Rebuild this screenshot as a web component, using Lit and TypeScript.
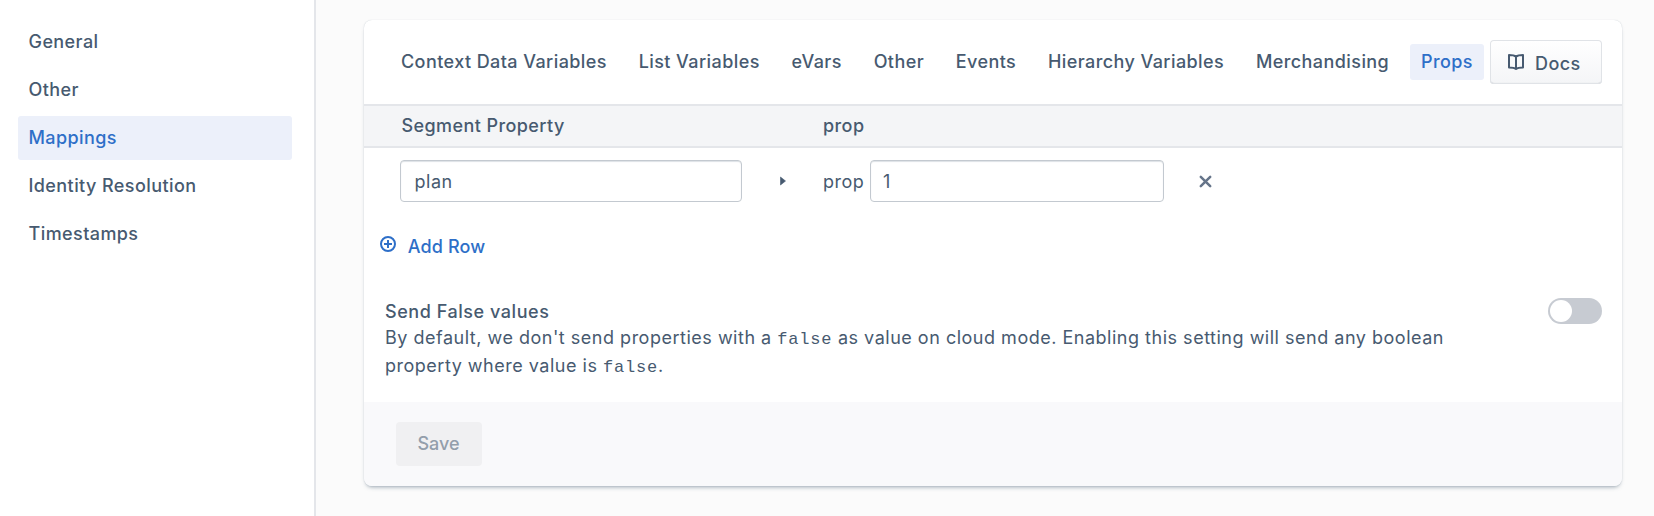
import { LitElement, html, css } from "lit";
import { customElement, state } from "lit/decorators.js";
import { classMap } from "lit/directives/class-map.js";

const NAV = ["General", "Other", "Mappings", "Identity Resolution", "Timestamps"];
const TABS = [
  "Context Data Variables",
  "List Variables",
  "eVars",
  "Other",
  "Events",
  "Hierarchy Variables",
  "Merchandising",
  "Props",
];

@customElement("app-root")
export class AppRoot extends LitElement {
  @state() private section = "Mappings";
  @state() private tab = "Props";
  @state() private sendFalse = false;

  static styles = css`
    :host {
      display: flex;
      height: 516px;
      overflow: hidden;
      background: #fbfbfb;
      color: #475a70;
      font: 500 18px/20px Inter, sans-serif;
      letter-spacing: 0.42px;
    }
    * { box-sizing: border-box; }
    button, input {
      font: inherit;
      letter-spacing: inherit;
      color: inherit;
      border: 0;
      background: none;
      margin: 0;
      padding: 0;
      text-align: left;
      white-space: nowrap;
    }
    .sidebar {
      flex: none;
      width: 316px;
      padding: 20px 22px 0 18px;
      background: #fff;
      border-right: 2px solid #e4e6ea;
      display: flex;
      flex-direction: column;
      gap: 4px;
    }
    .nav {
      height: 44px;
      padding: 0 10px 0 10.5px;
      border-radius: 3px;
    }
    .selected { background: #ecf0fa; color: #2e6fc8; }
    main { flex: 1; padding: 20px 32px 0 48px; }
    .card {
      height: 466px;
      border-radius: 8px;
      background: #fff;
      overflow: hidden;
      box-shadow: 0 0 1px rgba(67, 90, 111, 0.3), 0 3px 4px -2px rgba(67, 90, 111, 0.52);
      display: flex;
      flex-direction: column;
    }
    .head {
      height: 84px;
      padding: 0 20px 0 26px;
      display: flex;
      align-items: center;
    }
    .tabs { display: flex; gap: 9.75px; }
    .tab { height: 36px; padding: 0 11px; border-radius: 3px; }
    .docs {
      margin-left: auto;
      width: 112px;
      height: 44px;
      padding: 0 0 0 15px;
      display: flex;
      align-items: center;
      gap: 9px;
      border-radius: 4px;
      background: linear-gradient(#ffffff, #f4f5f7);
      box-shadow: inset 0 0 0 1px #e0e3e7, inset 0 -2px 1px -1px #cdd1d6;
      letter-spacing: 0.4px;
    }
    .docs span { padding-top: 3px; }
    .docs svg { margin: 0 0 1px 1px; }
    svg { display: block; flex: none; }
    .cols { display: grid; grid-template-columns: 421.5px 1fr; align-items: center; }
    .thead {
      height: 44px;
      padding-left: 37.5px;
      background: #f4f5f7;
      border: solid #e4e6ea;
      border-width: 2px 0;
    }
    .row {
      padding: 12px 0 0 36px;
      display: flex;
      align-items: center;
      font-weight: 400;
      letter-spacing: 0.5px;
    }
    input {
      height: 42px;
      padding: 1px 13px 0 13.5px;
      border: 1px solid #c3c9d0;
      border-radius: 4px;
      background: #fff;
      box-shadow: inset 0 1px 1px rgba(67, 90, 111, 0.18);
      outline: none;
    }
    .source { width: 342px; }
    .target { width: 294px; padding-left: 12px; }
    .arrow { margin: 0 37px 0 38px; }
    .prefix { width: 47px; padding-top: 1px; }
    .remove { margin-left: 34.5px; }
    .add {
      align-self: flex-start;
      margin: 33px 0 0 15px;
      height: 20px;
      display: flex;
      align-items: center;
      gap: 10.8px;
      color: #2e6fc8;
      letter-spacing: 0.12px;
    }
    .add svg { margin-top: -2px; }
    .add span { padding-top: 3px; }
    .setting {
      display: flex;
      justify-content: space-between;
      padding: 44px 20px 0 21px;
    }
    .title { line-height: 26px; letter-spacing: 0.55px; }
    .desc {
      width: 1090px;
      margin: -1px 0 0;
      font-weight: 400;
      line-height: 28px;
      letter-spacing: 0.51px;
    }
    code {
      font: 17px/20px "Liberation Mono", monospace;
      letter-spacing: 0.8px;
    }
    .toggle {
      flex: none;
      width: 54px;
      height: 26px;
      margin-top: -1px;
      border-radius: 13px;
      background: #c7cbd2;
      padding: 2px;
      display: flex;
    }
    .toggle.on { background: #2e6fc8; justify-content: flex-end; }
    .knob { width: 22px; height: 22px; border-radius: 50%; background: #fff; }
    .foot {
      margin-top: auto;
      height: 84px;
      padding: 20px 32px;
      background: #f9f9fb;
    }
    .save {
      width: 86px;
      height: 44px;
      padding-right: 1px;
      border-radius: 4px;
      background: #f0f0f2;
      color: #939eab;
      text-align: center;
      letter-spacing: 0;
    }
  `;

  render() {
    return html`
      <nav class="sidebar">
        ${NAV.map(
          (n) => html`<button
            class=${classMap({ nav: true, selected: n === this.section })}
            @click=${() => (this.section = n)}
          >${n}</button>`
        )}
      </nav>
      <main>
        <section class="card">
          <header class="head">
            <div class="tabs">
              ${TABS.map(
                (t) => html`<button
                  class=${classMap({ tab: true, selected: t === this.tab })}
                  @click=${() => (this.tab = t)}
                >${t}</button>`
              )}
            </div>
            <button class="docs">
              <svg width="20" height="18" viewBox="0 0 20 18" fill="none" stroke="#475a70" stroke-width="2" stroke-linejoin="round">
                <path d="M10 3.6C8.6 2.5 6.8 2 3 2v12.4c3.8 0 5.600.4 7 1.600 1.400-1.200 3.200-1.600 7-1.600V2c-3.800 0-5.600.5-7 1.600V16" />
              </svg>
              <span>Docs</span>
            </button>
          </header>
          <div class="thead cols"><div>Segment Property</div><div>prop</div></div>
          <div class="row">
            <input class="source" .value=${"plan"} />
            <svg class="arrow" width="6" height="10" viewBox="0 0 6 10"><path d="M.5 1v8L5.500 5z" fill="#475a70" stroke="#475a70" stroke-width=".6" stroke-linejoin="round" /></svg>
            <span class="prefix">prop</span>
            <input class="target" .value=${"1"} />
            <button class="remove" aria-label="Remove row">
              <svg width="13" height="13" viewBox="0 0 13 13" stroke="#66758a" stroke-width="2.500" stroke-linecap="round"><path d="M1.800 1.800l9.400 9.400M11.200 1.800l-9.400 9.400" /></svg>
            </button>
          </div>
          <button class="add">
            <svg width="18" height="18" viewBox="0 0 18 18" fill="none" stroke="#2e6fc8" stroke-width="2">
              <circle cx="9" cy="9" r="7" />
              <path d="M9 5v8M5 9h8" />
            </svg>
            <span>Add Row</span>
          </button>
          <div class="setting">
            <div>
              <div class="title">Send False values</div>
              <p class="desc">By default, we don't send properties with a <code>false</code> as value on cloud mode. Enabling this setting will send any boolean property where value is <code>false</code>.</p>
            </div>
            <button
              class=${classMap({ toggle: true, on: this.sendFalse })}
              aria-label="Send False values"
              @click=${() => (this.sendFalse = !this.sendFalse)}
            ><span class="knob"></span></button>
          </div>
          <footer class="foot"><button class="save" disabled>Save</button></footer>
        </section>
      </main>
    `;
  }
}
